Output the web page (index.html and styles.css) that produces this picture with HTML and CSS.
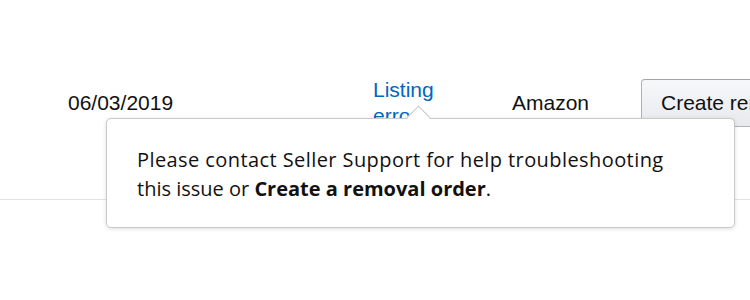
FILE: index.html
```html
<!DOCTYPE html>
<html>
<head>
<meta charset="utf-8">
<link rel="stylesheet" href="styles.css">
</head>
<body>
<div class="table">
  <div class="row">
    <div class="cell date">06/03/2019</div>
    <div class="cell status"><a class="link" href="#">Listing errors</a></div>
    <div class="cell carrier">Amazon</div>
    <div class="cell action"><button class="btn">Create removal order</button></div>
  </div>
  <div class="tooltip">
    <p class="tip-text">Please contact Seller Support for help troubleshooting this issue or <b>Create a removal order</b>.</p>
  </div>
</div>
</body>
</html>
```
FILE: styles.css
```css
html, body {
  margin: 0;
  padding: 0;
  background: #fff;
  overflow: hidden;
}
body {
  width: 750px;
  height: 300px;
  font-family: "Liberation Sans", Arial, sans-serif;
  color: #111;
}
.table {
  position: relative;
  padding-top: 78px;
}
.row {
  display: flex;
  align-items: center;
  padding-left: 68px;
  height: 50px;
  padding-bottom: 71px;
  border-bottom: 1px solid #e3e3e3;
  white-space: nowrap;
}
.cell {
  font-size: 21px;
  line-height: 26px;
}
.date {
  width: 305px;
  flex: none;
}
.status {
  width: 139px;
  flex: none;
  white-space: normal;
}
.link {
  display: block;
  width: 90px;
  color: #0066c0;
  text-decoration: none;
}
.carrier {
  width: 129px;
  flex: none;
}
.action {
  flex: none;
}
.btn {
  font-family: "Liberation Sans", Arial, sans-serif;
  font-size: 21px;
  color: #111;
  height: 48px;
  padding: 0 19px;
  border: 1px solid #adb1b8;
  border-top-color: #a2a6ac;
  border-radius: 4px;
  background: linear-gradient(#f7f8fa, #e7e9ec);
  white-space: nowrap;
}
.tooltip {
  position: absolute;
  left: 106px;
  top: 118px;
  width: 629px;
  height: 110px;
  box-sizing: border-box;
  background: #fff;
  border: 1px solid #c9c9c9;
  border-radius: 5px;
  box-shadow: 0 1px 4px rgba(0, 0, 0, 0.13);
  padding: 26px 30px 0 30px;
}
.tooltip::before {
  content: "";
  position: absolute;
  left: 303px;
  top: -10px;
  width: 17px;
  height: 17px;
  box-sizing: border-box;
  background: #fff;
  border-top: 1px solid #c9c9c9;
  border-left: 1px solid #c9c9c9;
  transform: rotate(45deg);
}
.tip-text {
  margin: 0;
  max-width: 540px;
  font-family: "Open Sans", sans-serif;
  font-size: 20px;
  line-height: 29px;
  color: #111;
}
.tip-text::first-line {
  letter-spacing: 0.42px;
}
.tip-text b {
  font-weight: 700;
}
```
